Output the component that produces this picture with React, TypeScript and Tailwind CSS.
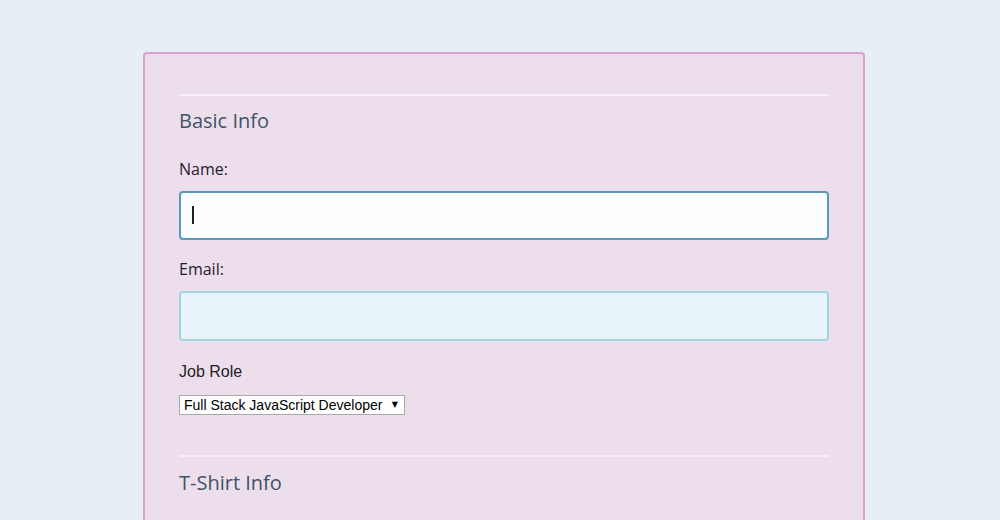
import { useState } from "react";

const JOB_ROLES = [
  "Full Stack JavaScript Developer",
  "Front End Developer",
  "Back End Developer",
  "Designer",
  "Student",
  "Other",
];

export default function App() {
  const [name, setName] = useState("");
  const [email, setEmail] = useState("");
  const [role, setRole] = useState(JOB_ROLES[0]);

  return (
    <div className="min-h-screen bg-[#e6eef6] pt-[52px]">
      <form className="ml-[143px] w-[722px] rounded-[4px] border-2 border-[#dba2d0] bg-[#eddeeb] px-[34px] pt-[40px] pb-10">
        <hr className="h-[2px] border-0 bg-[#f7eff6]" />
        <h2 className="mt-[13px] text-[20px] leading-[24px] text-[#415369] [font-family:'Open_Sans',sans-serif]">
          Basic Info
        </h2>

        <label
          htmlFor="name"
          className="mt-[26px] block text-[16px] leading-[20px] text-[#1f2030] [font-family:'Open_Sans',sans-serif]"
        >
          Name:
        </label>
        <div className="relative mt-[12px]">
          <input
            id="name"
            value={name}
            onChange={(e) => setName(e.target.value)}
            className="block h-[49px] w-full rounded-[4px] border-2 border-[#5a9ab7] bg-[#fdfffe] px-3 outline-none"
          />
          {name === "" && (
            <span className="pointer-events-none absolute left-[13px] top-[15px] h-[18px] w-[1.5px] bg-[#222]" />
          )}
        </div>

        <label
          htmlFor="mail"
          className="mt-[19px] block text-[16px] leading-[20px] text-[#1f2030] [font-family:'Open_Sans',sans-serif]"
        >
          Email:
        </label>
        <input
          id="mail"
          type="email"
          value={email}
          onChange={(e) => setEmail(e.target.value)}
          className="mt-[12px] block h-[50px] w-full rounded-[4px] border-2 border-[#a6d1df] bg-[#e8f4fa] px-3 outline-none"
        />

        <label
          htmlFor="title"
          className="mt-[22px] block text-[16px] leading-[18px] text-[#222] [font-family:'Liberation_Sans',Arial,sans-serif]"
        >
          Job Role
        </label>
        <div className="relative mt-[14px] w-[226px]">
          <select
            id="title"
            value={role}
            onChange={(e) => setRole(e.target.value)}
            className="block h-[20px] w-full appearance-none border border-[#a9a9a9] bg-white pl-[4px] pr-4 text-[14px] leading-[18px] text-black [font-family:'Liberation_Sans',Arial,sans-serif]"
          >
            {JOB_ROLES.map((r) => (
              <option key={r}>{r}</option>
            ))}
          </select>
          <span className="pointer-events-none absolute right-[7px] top-[3px] text-[8px] leading-[14px] text-black [font-family:'DejaVu_Sans',sans-serif]">
            ▼
          </span>
        </div>

        <hr className="mt-[40px] h-[2px] border-0 bg-[#f7eff6]" />
        <h2 className="mt-[14px] text-[20px] leading-[24px] text-[#415369] [font-family:'Open_Sans',sans-serif]">
          T-Shirt Info
        </h2>
      </form>
    </div>
  );
}
